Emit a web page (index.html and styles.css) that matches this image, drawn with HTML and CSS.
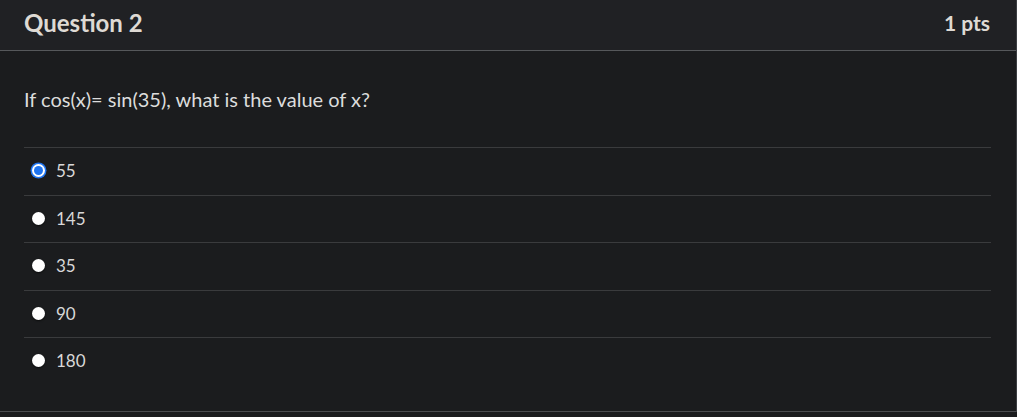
FILE: index.html
```html
<!DOCTYPE html>
<html>
<head>
<meta charset="utf-8">
<link rel="stylesheet" href="styles.css">
</head>
<body>
<div class="quiz">
  <div class="quiz-header">
    <h2 class="quiz-title">Question 2</h2>
    <span class="quiz-pts">1 pts</span>
  </div>
  <div class="quiz-body">
    <p class="quiz-question">If cos(x)= sin(35), what is the value of x?</p>
    <div class="answers">
      <label class="answer"><span class="radio radio-checked"></span><span class="answer-text">55</span></label>
      <label class="answer"><span class="radio"></span><span class="answer-text">145</span></label>
      <label class="answer"><span class="radio"></span><span class="answer-text">35</span></label>
      <label class="answer"><span class="radio"></span><span class="answer-text">90</span></label>
      <label class="answer"><span class="radio"></span><span class="answer-text">180</span></label>
    </div>
  </div>
</div>
</body>
</html>
```
FILE: styles.css
```css
html, body {
  margin: 0;
  padding: 0;
  background: #1b1c1e;
  font-family: Lato, "Noto Sans", sans-serif;
}
.quiz {
  width: 1017px;
  box-sizing: border-box;
  border-right: 1px solid #3b3e42;
  border-bottom: 1px solid #4a4c4f;
}
.quiz-header {
  height: 51px;
  box-sizing: border-box;
  background: #202124;
  border-bottom: 1px solid #56585b;
  display: flex;
  align-items: center;
  justify-content: space-between;
  padding: 0 26px 6px 24px;
}
.quiz-title {
  margin: 0;
  font-size: 24px;
  font-weight: 700;
  color: #dedad4;
}
.quiz-pts {
  font-size: 21px;
  font-weight: 700;
  color: #dedad4;
}
.quiz-body {
  padding: 0 25px 26px 24px;
}
.quiz-question {
  margin: 0;
  padding: 35px 0 34px;
  font-size: 20px;
  line-height: 27px;
  color: #dcdcdc;
}
.answers {
  display: flex;
  flex-direction: column;
}
.answer {
  display: flex;
  align-items: center;
  height: 47.5px;
  box-sizing: border-box;
  border-top: 1px solid #3a3b3d;
  padding-left: 8px;
  padding-bottom: 1px;
}
.radio {
  width: 13px;
  height: 13px;
  border-radius: 50%;
  background: #ffffff;
  box-shadow: 0 1px 2px rgba(0,0,0,0.6);
  margin-right: 11px;
  flex: none;
}
.radio-checked {
  width: 9px;
  height: 9px;
  margin-left: 2px;
  margin-right: 13px;
  background: #1f74f0;
  box-shadow: 0 0 0 2px #ffffff, 0 0 0 3.5px #1f74f0;
}
.answer-text {
  font-size: 17px;
  color: #d8d8d8;
}
```
